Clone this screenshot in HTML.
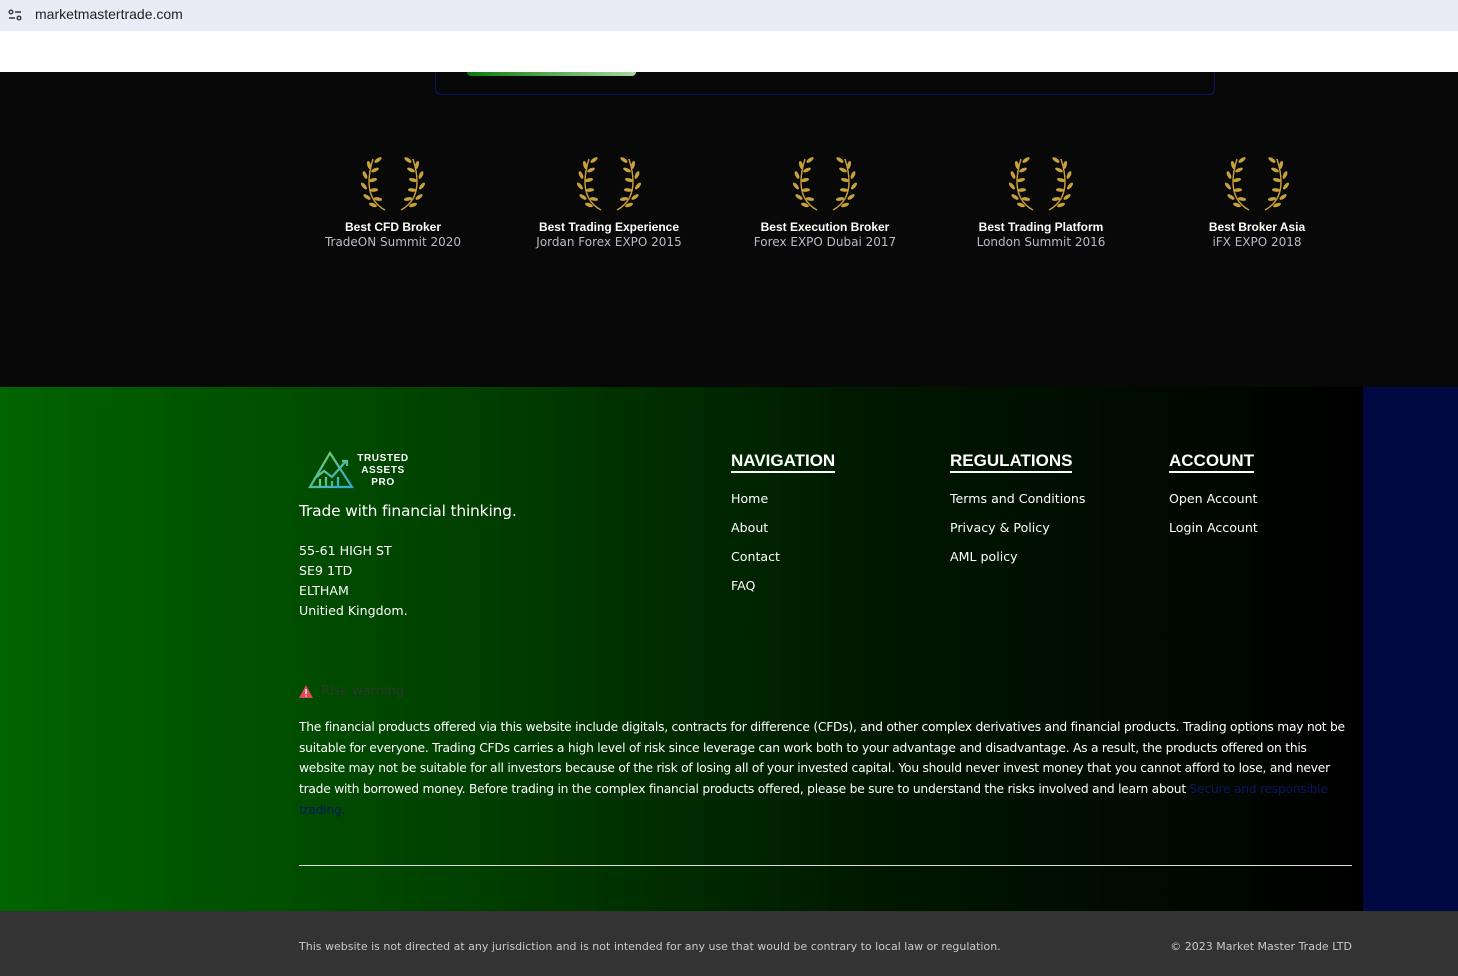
<!DOCTYPE html>
<html><head><meta charset="utf-8"><style>
*{margin:0;padding:0;box-sizing:border-box}
body{width:1458px;height:976px;overflow:hidden;background:#080808;font-family:"DejaVu Sans","Liberation Sans",sans-serif;position:relative}
.bar{position:absolute;left:0;top:0;width:1458px;height:31px;background:#e9ecf5}
.bar .url{position:absolute;left:35px;top:6px;font-size:14px;color:#222;font-family:"Liberation Sans",sans-serif}
.white{position:absolute;left:0;top:31px;width:1458px;height:41px;background:#fff}
.box{position:absolute;left:435px;top:72px;width:780px;height:23px;border:1px solid #0b1460;border-top:none;border-radius:0 0 6px 6px}
.btn{position:absolute;left:467px;top:72px;width:169px;height:4px;background:linear-gradient(90deg,#0a7a0a,#a8d8a0);border-radius:0 0 6px 6px}
.aw{position:absolute;top:157px;width:220px;text-align:center}
.aw svg{display:block;margin:0 auto}
.aw b{display:block;color:#fff;font-size:12px;margin-top:9px;font-family:"Liberation Sans",sans-serif;font-weight:bold}
.aw span{display:block;color:#b8bcc8;font-size:12px;margin-top:1px}
.foot{position:absolute;left:0;top:387px;width:1363px;height:524px;background:linear-gradient(90deg,#006400 0%,#003f00 35%,#001700 65%,#000 100%)}
.navy{position:absolute;left:1363px;top:387px;width:95px;height:524px;background:#000942}
.t{position:absolute;color:#fff;font-size:13px}
.n{font-size:12.6px}
.h{position:absolute;color:#fff;font-size:17px;font-weight:bold;font-family:"Liberation Sans",sans-serif;border-bottom:2px solid #fff;line-height:21px}
.risk{position:absolute;left:299px;top:717px;width:1050px;color:#fff;font-size:12.3px;line-height:20.7px;letter-spacing:-0.25px}
.bottom{position:absolute;left:0;top:911px;width:1458px;height:65px;background:#333}
.bottom .l{position:absolute;left:299px;top:29px;color:#c9c9c9;font-size:11px}
.bottom .r{position:absolute;right:106px;top:29px;color:#c9c9c9;font-size:11px}
</style></head><body>
<div class="bar"><svg style="position:absolute;left:8px;top:8px" width="14" height="14" viewBox="0 0 14 14" fill="none" stroke="#333" stroke-width="1.4"><circle cx="3" cy="4" r="1.8"/><path d="M7 4h6M1 10h6"/><circle cx="11" cy="10" r="1.8"/></svg><span class="url">marketmastertrade.com</span></div>
<div class="white"></div>
<div class="box"></div><div class="btn"></div>
<svg width="0" height="0" style="position:absolute"><defs><g id="lf"><ellipse cx="0" cy="0" rx="1.8" ry="4.2" fill="#c9a03a"/></g>
<g id="laurel"><path d="M24 53 Q0 40 12 2" stroke="#c9a03a" stroke-width="1.4" fill="none"/><path d="M40 53 Q64 40 52 2" stroke="#c9a03a" stroke-width="1.4" fill="none"/>
<use href="#lf" transform="translate(17,3) rotate(55)"/><use href="#lf" transform="translate(8,8) rotate(-15)"/><use href="#lf" transform="translate(14,13) rotate(65)"/><use href="#lf" transform="translate(4,18) rotate(-25)"/><use href="#lf" transform="translate(12,23) rotate(75)"/><use href="#lf" transform="translate(3,29) rotate(-40)"/><use href="#lf" transform="translate(13,33) rotate(85)"/><use href="#lf" transform="translate(6,40) rotate(-55)"/><use href="#lf" transform="translate(17,42) rotate(100)"/><use href="#lf" transform="translate(12,48) rotate(-70)"/>
<use href="#lf" transform="translate(47,3) rotate(-55)"/><use href="#lf" transform="translate(56,8) rotate(15)"/><use href="#lf" transform="translate(50,13) rotate(-65)"/><use href="#lf" transform="translate(60,18) rotate(25)"/><use href="#lf" transform="translate(52,23) rotate(-75)"/><use href="#lf" transform="translate(61,29) rotate(40)"/><use href="#lf" transform="translate(51,33) rotate(-85)"/><use href="#lf" transform="translate(58,40) rotate(55)"/><use href="#lf" transform="translate(47,42) rotate(-100)"/><use href="#lf" transform="translate(52,48) rotate(70)"/></g></defs></svg>
<div class="aw" style="left:283px"><svg width="64" height="54"><use href="#laurel"/></svg><b>Best CFD Broker</b><span>TradeON Summit 2020</span></div>
<div class="aw" style="left:499px"><svg width="64" height="54"><use href="#laurel"/></svg><b>Best Trading Experience</b><span>Jordan Forex EXPO 2015</span></div>
<div class="aw" style="left:715px"><svg width="64" height="54"><use href="#laurel"/></svg><b>Best Execution Broker</b><span>Forex EXPO Dubai 2017</span></div>
<div class="aw" style="left:931px"><svg width="64" height="54"><use href="#laurel"/></svg><b>Best Trading Platform</b><span>London Summit 2016</span></div>
<div class="aw" style="left:1147px"><svg width="64" height="54"><use href="#laurel"/></svg><b>Best Broker Asia</b><span>iFX EXPO 2018</span></div>
<div class="foot"></div><div class="navy"></div>
<svg style="position:absolute;left:308px;top:451px" width="48" height="38" viewBox="0 0 48 38" fill="none" stroke-width="2.2"><defs><linearGradient id="g" x1="0" y1="0" x2="1" y2="1"><stop offset="0" stop-color="#7ed36a"/><stop offset="1" stop-color="#2fa8d8"/></linearGradient></defs><path d="M2 36 L22 2 L44 36 Z" stroke="url(#g)"/><path d="M6 28 L16 20 L24 26 L38 10 M34 10h5v5" stroke="url(#g)"/><path d="M12 36v-8M18 36v-10M24 36v-6M30 36v-10" stroke="url(#g)"/></svg>
<div style="position:absolute;left:357px;top:453px;color:#fff;font:bold 10px 'Liberation Sans',sans-serif;text-align:center;letter-spacing:0.6px;line-height:12px;width:52px">TRUSTED<br>ASSETS<br>PRO</div>
<div class="t" style="left:299px;top:502px;font-size:15.5px;letter-spacing:-0.2px">Trade with financial thinking.</div>
<div class="t n" style="left:299px;top:541px;line-height:20px">55-61 HIGH ST<br>SE9 1TD<br>ELTHAM<br>Unitied Kingdom.</div>
<div class="h" style="left:731px;top:450px">NAVIGATION</div>
<div class="h" style="left:950px;top:450px">REGULATIONS</div>
<div class="h" style="left:1169px;top:450px">ACCOUNT</div>
<div class="t n" style="left:731px;top:484px;line-height:29px">Home<br>About<br>Contact<br>FAQ</div>
<div class="t n" style="left:950px;top:484px;line-height:29px">Terms and Conditions<br>Privacy &amp; Policy<br>AML policy</div>
<div class="t n" style="left:1169px;top:484px;line-height:29px">Open Account<br>Login Account</div>
<svg style="position:absolute;left:299px;top:685px" width="14" height="13" viewBox="0 0 14 13"><path d="M7 0 L14 13 H0 Z" fill="#e04a5a"/><path d="M7 4v5M7 10.5v1" stroke="#fff" stroke-width="1.4"/></svg>
<div class="t" style="left:321px;top:684px;color:#2a3a2a">Risk warning</div>
<div class="risk">The financial products offered via this website include digitals, contracts for difference (CFDs), and other complex derivatives and financial products. Trading options may not be suitable for everyone. Trading CFDs carries a high level of risk since leverage can work both to your advantage and disadvantage. As a result, the products offered on this website may not be suitable for all investors because of the risk of losing all of your invested capital. You should never invest money that you cannot afford to lose, and never trade with borrowed money. Before trading in the complex financial products offered, please be sure to understand the risks involved and learn about <span style="color:#0a1660">Secure and responsible trading.</span></div>
<div style="position:absolute;left:299px;top:865px;width:1053px;height:1px;background:#ddd"></div>
<div class="bottom"><span class="l">This website is not directed at any jurisdiction and is not intended for any use that would be contrary to local law or regulation.</span><span class="r">© 2023 Market Master Trade LTD</span></div>
</body></html>
